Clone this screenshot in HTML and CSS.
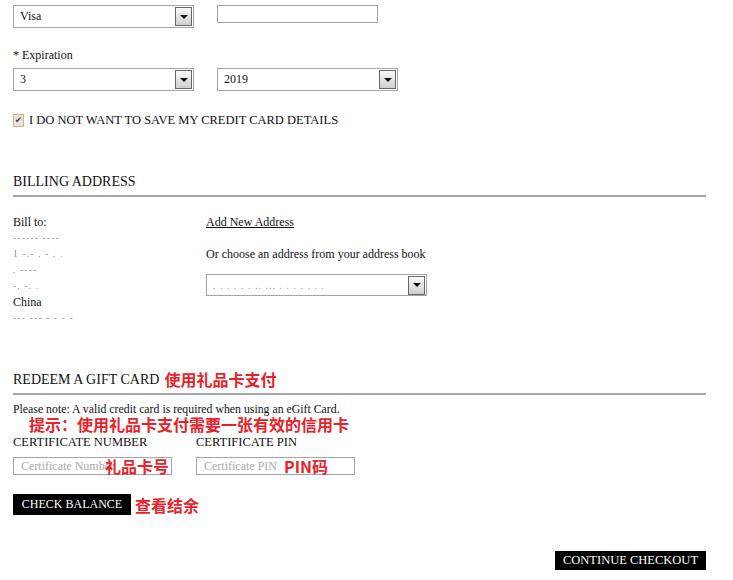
FILE: index.html
```html
<!DOCTYPE html>
<html lang="en">
<head>
    <meta charset="UTF-8">
    <title>Checkout</title>
    <link rel="stylesheet" href="styles.css">
</head>
<body>
    <div class="page">
        <div class="row row-card">
            <div class="select w181"><span>Visa</span><span class="arrow"></span></div>
            <input class="text-input w161" type="text">
        </div>

        <p class="label exp-label">* Expiration</p>
        <div class="row">
            <div class="select w181"><span>3</span><span class="arrow"></span></div>
            <div class="select w181"><span>2019</span><span class="arrow"></span></div>
        </div>

        <label class="save-line">
            <span class="checkbox">&#10004;</span>
            I DO NOT WANT TO SAVE MY CREDIT CARD DETAILS
        </label>

        <h2 class="section-title billing-title">BILLING ADDRESS</h2>
        <div class="billing">
            <div class="bill-to">
                <p>Bill to:</p>
                <p class="blur">------ ----</p>
                <p class="blur">1 -.-    .  -  .   .</p>
                <p class="blur">. ----</p>
                <p class="blur">-. -. .</p>
                <p>China</p>
                <p class="blur">--- --- - - - -</p>
            </div>
            <div class="address-book">
                <a href="#">Add New Address</a>
                <p class="choose">Or choose an address from your address book</p>
                <div class="select w221"><span class="blur">.  .  . .  . . ..  ... .   . .  .   .  . .</span><span class="arrow"></span></div>
            </div>
        </div>

        <h2 class="section-title gift-title">REDEEM A GIFT CARD <span class="note-cn">使用礼品卡支付</span></h2>
        <p class="small-note">Please note: A valid credit card is required when using an eGift Card.</p>
        <p class="note-cn hint">提示：使用礼品卡支付需要一张有效的信用卡</p>
        <div class="cert-row">
            <div class="cert">
                <p class="label caps">CERTIFICATE NUMBER</p>
                <div class="field">
                    <input class="text-input w159" type="text" placeholder="Certificate Number">
                    <span class="note-cn tag tag-num">礼品卡号</span>
                </div>
            </div>
            <div class="cert">
                <p class="label caps">CERTIFICATE PIN</p>
                <div class="field">
                    <input class="text-input w159" type="text" placeholder="Certificate PIN">
                    <span class="note-cn tag tag-pin">PIN码</span>
                </div>
            </div>
        </div>

        <div class="balance-line">
            <button class="btn btn-balance">CHECK BALANCE</button>
            <span class="note-cn">查看结余</span>
        </div>

        <div class="footer-line">
            <button class="btn btn-continue">CONTINUE CHECKOUT</button>
        </div>
    </div>
</body>
</html>
```

FILE: styles.css
```css
* {
    margin: 0;
    padding: 0;
    box-sizing: border-box;
}

body {
    font-family: "Liberation Serif", "Times New Roman", serif;
    font-size: 12px;
    color: #111;
    background: #fff;
}

.page {
    width: 706px;
    padding-left: 13px;
}

.row {
    display: flex;
    gap: 23px;
    align-items: flex-start;
}

.row-card {
    margin-top: 5px;
}

.w181 { width: 181px; }
.w221 { width: 221px; }
.w161 { width: 161px; }
.w159 { width: 159px; }

.select {
    height: 23px;
    border: 1px solid #a5a5a5;
    display: flex;
    align-items: center;
    justify-content: space-between;
    padding: 0 1px 0 6px;
    font-size: 12px;
}

.arrow {
    width: 17px;
    height: 19px;
    border: 1px solid #666;
    background: linear-gradient(#fafafa, #cfcfcf);
    display: flex;
    align-items: center;
    justify-content: center;
}

.arrow::after {
    content: "";
    border-left: 4px solid transparent;
    border-right: 4px solid transparent;
    border-top: 4px solid #111;
}

.text-input {
    height: 18px;
    border: 1px solid #a5a5a5;
    font-family: inherit;
    font-size: 12px;
    padding: 0 7px;
    outline: none;
}

.text-input::placeholder {
    color: #aaa;
}

.label {
    font-size: 12px;
}

.caps {
    font-size: 12.5px;
}

.exp-label {
    margin-top: 20px;
    margin-bottom: 6px;
    line-height: 14px;
}

.save-line {
    display: flex;
    align-items: center;
    gap: 5px;
    margin-top: 22px;
    font-size: 12.5px;
}

.checkbox {
    width: 11px;
    height: 13px;
    border: 1px solid #d8b36a;
    background: #e4e4e4;
    color: #444;
    font-size: 9px;
    line-height: 11px;
    text-align: center;
    font-family: "DejaVu Sans", sans-serif;
}

.section-title {
    font-weight: normal;
    font-size: 14px;
    line-height: 16px;
    padding-bottom: 5px;
    border-bottom: 2px solid #a5a5a5;
    width: 693px;
}

.billing-title {
    margin-top: 46px;
}

.billing {
    display: flex;
    margin-top: 17px;
}

.bill-to {
    width: 193px;
}

.bill-to p {
    line-height: 16px;
}

.blur {
    color: #9a9a9a;
    font-size: 10px;
    letter-spacing: 1px;
    filter: blur(0.4px);
}

.address-book a {
    color: #111;
    display: block;
    line-height: 16px;
}

.choose {
    margin-top: 16px;
    line-height: 16px;
}

.address-book .select {
    margin-top: 12px;
    height: 22px;
}

.gift-title {
    margin-top: 44px;
    display: flex;
    align-items: flex-end;
    gap: 5px;
}

.note-cn {
    font-family: "Noto Sans CJK SC", sans-serif;
    font-weight: bold;
    color: #e8222a;
    font-size: 16px;
    line-height: 18px;
}

.small-note {
    margin-top: 8px;
    font-size: 11.8px;
    line-height: 12px;
}

.hint {
    margin-left: 16px;
    margin-top: 1px;
    line-height: 16px;
}

.cert-row {
    display: flex;
    gap: 24px;
    margin-top: 3px;
}

.cert .label {
    line-height: 14px;
}

.field {
    position: relative;
    margin-top: 8px;
}

.tag {
    position: absolute;
    top: -1px;
    line-height: 20px;
}

.tag-num {
    left: 92px;
}

.tag-pin {
    left: 88px;
}

.balance-line {
    display: flex;
    align-items: center;
    gap: 4px;
    margin-top: 19px;
}

.btn {
    background: #000;
    color: #fff;
    border: none;
    font-family: inherit;
    font-size: 12px;
    cursor: pointer;
}

.btn-balance {
    width: 118px;
    height: 21px;
}

.footer-line {
    display: flex;
    justify-content: flex-end;
    width: 693px;
    margin-top: 36px;
}

.btn-continue {
    width: 151px;
    height: 19px;
    font-size: 12.5px;
}
```
